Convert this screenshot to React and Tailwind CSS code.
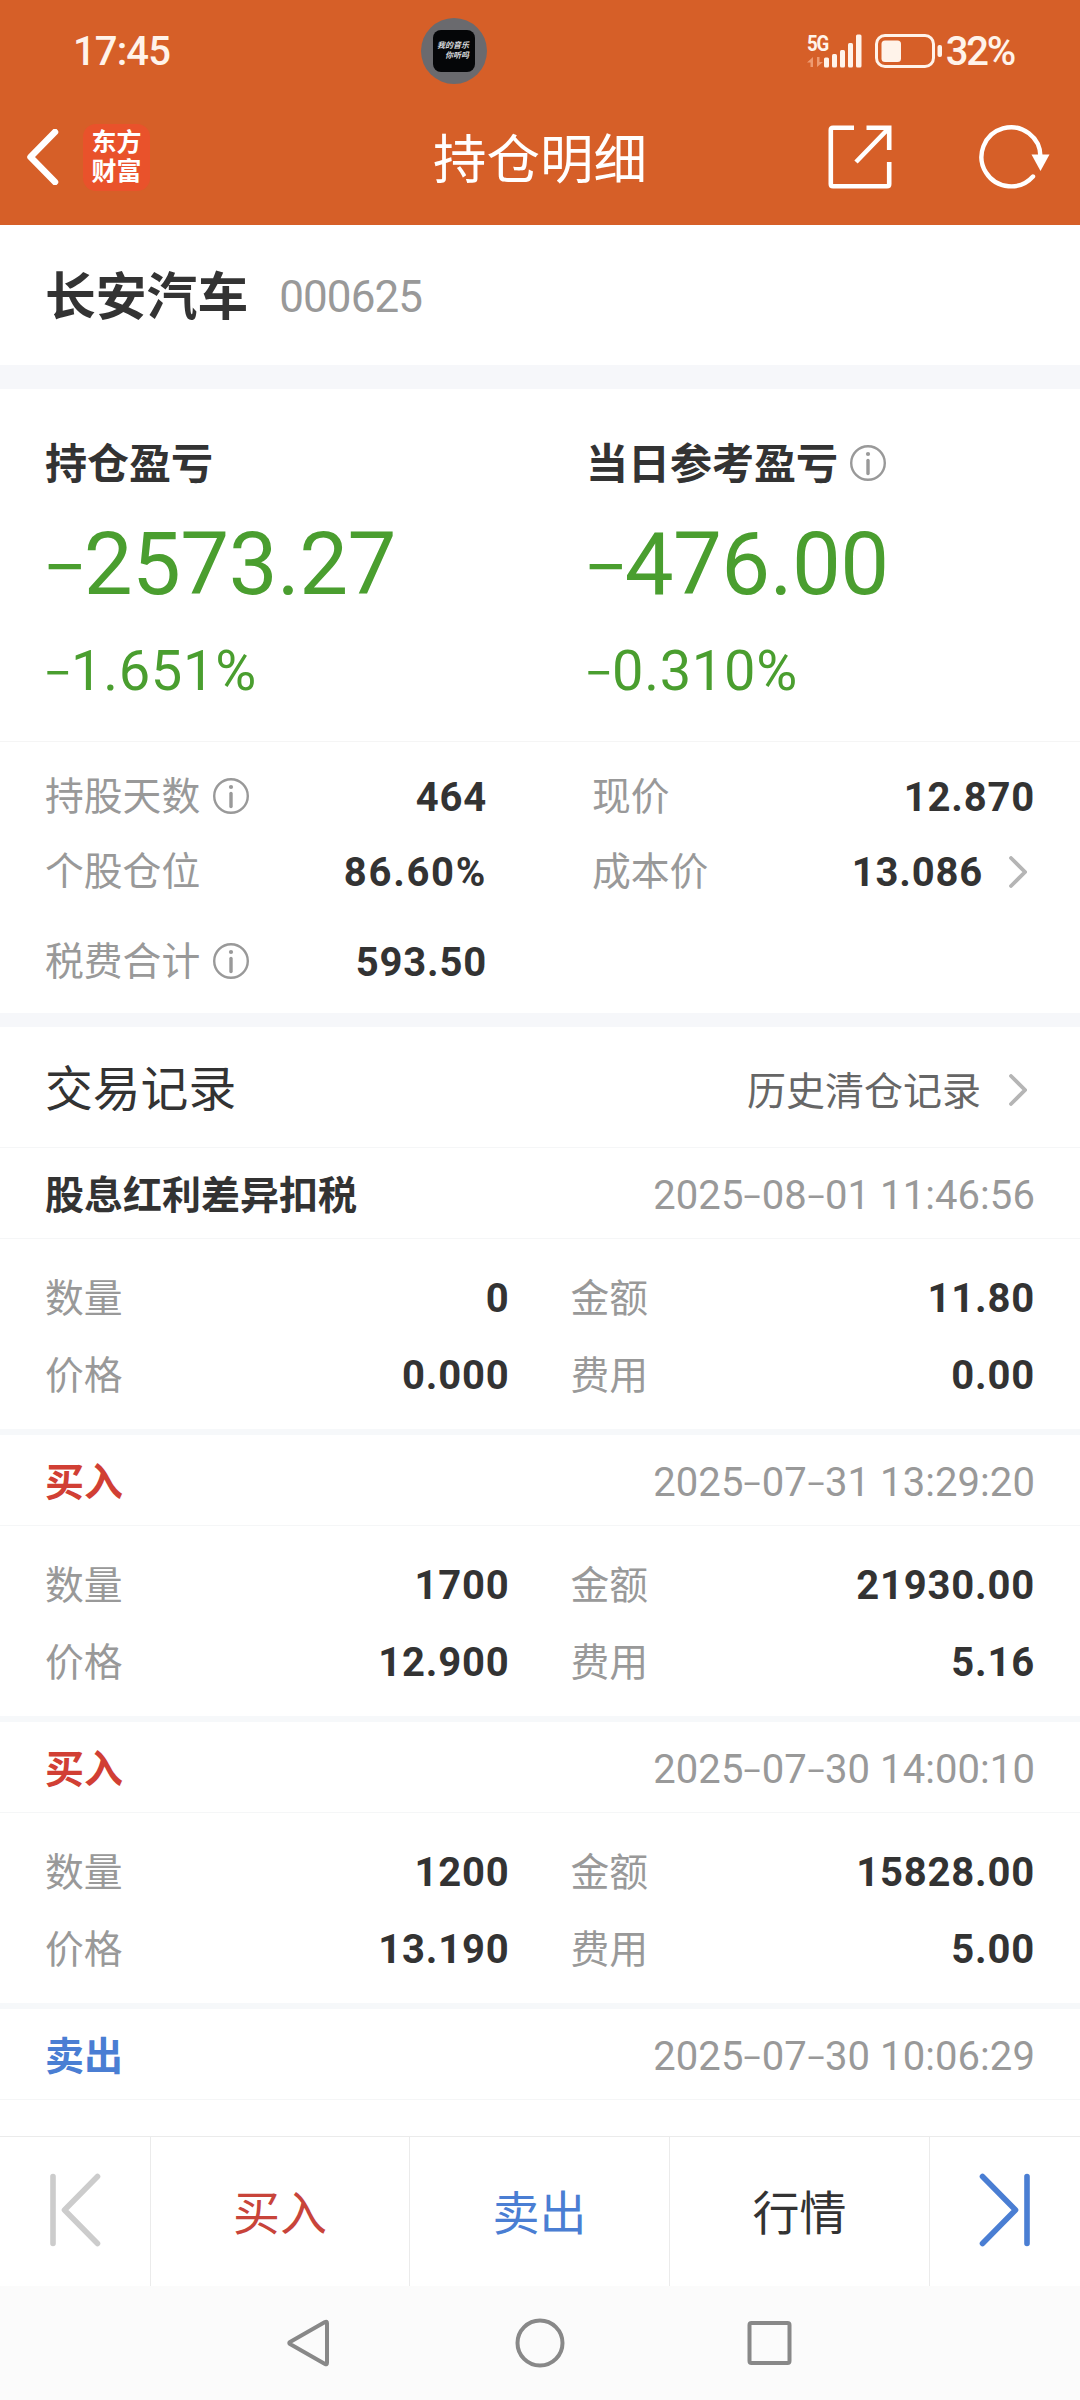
import React from "react";

const records = [
  {
    type: "股息红利差异扣税",
    color: "text-[#333333]",
    time: "2025-08-01 11:46:56",
    quantity: "0",
    amount: "11.80",
    price: "0.000",
    fee: "0.00",
  },
  {
    type: "买入",
    color: "text-[#d13f34]",
    time: "2025-07-31 13:29:20",
    quantity: "1700",
    amount: "21930.00",
    price: "12.900",
    fee: "5.16",
  },
  {
    type: "买入",
    color: "text-[#d13f34]",
    time: "2025-07-30 14:00:10",
    quantity: "1200",
    amount: "15828.00",
    price: "13.190",
    fee: "5.00",
  },
  {
    type: "卖出",
    color: "text-[#4a7ed3]",
    time: "2025-07-30 10:06:29",
  },
];

// Roboto's hyphen is too short for figures, so the dash uses a stretched Inter
const Figures = ({ children, className }) => (
  <span className={`whitespace-pre ${className}`}>
    {children.split(/(-)/).map((part, i) =>
      part === "-" ? (
        <span
          key={i}
          className="inline-block leading-none scale-x-[1.22] font-['Inter',sans-serif] font-light"
        >
          -
        </span>
      ) : (
        part
      ),
    )}
  </span>
);

const InfoIcon = ({ className }) => (
  <svg
    viewBox="0 0 36 36"
    className={`w-9 h-9 shrink-0 ${className}`}
    fill="none"
    stroke="#999999"
  >
    <circle cx="18" cy="18" r="16.8" strokeWidth="2.4" />
    <path d="M18 15.5v13" strokeWidth="3.4" strokeLinecap="round" />
    <circle cx="18" cy="9" r="2.1" fill="#999999" stroke="none" />
  </svg>
);

const ChevronRight = () => (
  <svg
    viewBox="0 0 18 32"
    className="w-[18px] h-8 shrink-0"
    fill="none"
    stroke="#b5b5b5"
    strokeWidth="3.8"
    strokeLinecap="round"
  >
    <path d="M2 2l14 14L2 30" />
  </svg>
);

const StatusBar = () => (
  <div className="h-[101px] flex items-center pl-[73px] pr-[66px] text-[#fff3ea]">
    <span className="text-[40px] font-medium leading-none tracking-[-0.900px] w-[348px] pt-0.5">
      17:45
    </span>
    <div className="w-[66px] h-[66px] rounded-full bg-[#6a6a6e] flex items-center justify-center">
      <div className="w-[42px] h-[42px] rounded-lg bg-[#050608] text-[#d8dadd] flex flex-col items-end justify-center pr-[6px] text-[8px] leading-[10px] font-bold italic">
        <span>我的音乐</span>
        <span>你听吗</span>
      </div>
    </div>
    <div className="ml-auto flex items-center">
      <div className="w-[55px] h-[34px] flex">
        <div className="w-[17px] flex flex-col">
          <span className="text-[22px] font-bold leading-[19px] h-[22px] tracking-[-1.500px] origin-left scale-x-[0.85]">
            5G
          </span>
          <svg viewBox="0 0 17 12" className="w-[17px] h-3" fill="#ee9a70">
            <path d="M0 6.500L6 1v10H3.500V6.500zM16 6L10 11V1h2.500V6z" />
          </svg>
        </div>
        <svg
          viewBox="0 0 38 34"
          className="w-[38px] h-[34px]"
          fill="currentColor"
        >
          <rect x="0" y="23.500" width="5" height="10" rx="1.500" />
          <rect x="8" y="20" width="5" height="13.500" rx="1.500" />
          <rect x="16" y="16" width="5" height="17.500" rx="1.500" />
          <rect x="24" y="9" width="5" height="24.500" rx="1.500" />
          <rect x="32" y="0.500" width="5.500" height="33" rx="1.500" />
        </svg>
      </div>
      <svg
        viewBox="0 0 68 34"
        className="w-[68px] h-[34px] ml-[13px]"
        fill="currentColor"
      >
        <rect
          x="1.500"
          y="1.500"
          width="57"
          height="31"
          rx="8.500"
          fill="none"
          stroke="currentColor"
          strokeWidth="3"
        />
        <rect x="6.500" y="6.500" width="19.500" height="21.500" rx="3.500" />
        <rect x="62.500" y="11" width="4.500" height="12" rx="2" />
      </svg>
      <span className="text-[40px] font-medium leading-none tracking-[-2.200px] ml-[3px] pt-0.5">
        32%
      </span>
    </div>
  </div>
);

const TitleBar = () => (
  <div className="h-[112px] grid grid-cols-[1fr_auto_1fr] items-center text-white">
    <div className="flex items-center pl-[26px]">
      <svg
        viewBox="0 0 34 56"
        className="w-[34px] h-14"
        fill="none"
        stroke="currentColor"
        strokeWidth="6.500"
        strokeLinecap="round"
        strokeLinejoin="round"
      >
        <path d="M29 3L4.500 28L29 53" />
      </svg>
      <div className="ml-[23px] w-[67px] h-[67px] rounded-[13px] bg-[#e9522b] flex flex-col items-center justify-center text-[25px] leading-[29px] font-bold">
        <span>东方</span>
        <span>财富</span>
      </div>
    </div>
    <h1 className="text-[53.500px] leading-none pt-[7px]">持仓明细</h1>
    <div className="flex items-center justify-end pr-[29px]">
      <svg
        viewBox="0 0 64 64"
        className="w-16 h-16"
        fill="none"
        stroke="currentColor"
        strokeWidth="4.600"
      >
        <path d="M26 2.800H5Q2.800 2.800 2.800 5V59Q2.800 61.200 5 61.200H59Q61.200 61.200 61.200 59V37" />
        <path d="M38.500 2.800H61.200V25M60 4L28 37" />
      </svg>
      <svg
        viewBox="0 0 72 64"
        className="w-[72px] h-16 ml-[87px]"
        fill="none"
        stroke="currentColor"
        strokeWidth="4.400"
        strokeLinecap="round"
      >
        <path d="M61.500 32A29.500 29.500 0 1 0 54 51.500" />
        <path d="M52.500 29.500h18L61.500 46z" fill="currentColor" stroke="none" />
      </svg>
    </div>
  </div>
);

const ProfitBlock = ({ title, value, percent, info }) => (
  <div className="text-[#4a9e2f]">
    <div className="h-[60px] flex items-center text-[#333333]">
      <span className="text-[42px] font-bold leading-none pt-[3px]">
        {title}
      </span>
      {info && <InfoIcon className="ml-3" />}
    </div>
    <Figures className="block text-[87px] leading-[88px] mt-[26px] tracking-[-0.600px]">
      {value}
    </Figures>
    <Figures className="block text-[56px] leading-[64px] mt-[31px] tracking-[0.700px]">
      {percent}
    </Figures>
  </div>
);

const StatRow = ({ label, value, info, arrow, tracking }) => (
  <div className="h-[75px] flex items-center justify-between">
    <span className="flex items-center text-[38.800px] leading-none text-[#999999]">
      <span className="pt-[2px]">{label}</span>
      {info && <InfoIcon className="ml-[13px]" />}
    </span>
    <span
      className={`flex items-center text-[40px] leading-none font-bold text-[#333333] ${tracking || "tracking-[0.800px]"}`}
    >
      <span className="pt-[2px]">{value}</span>
      {arrow && (
        <span className="ml-[26px] mr-[8px] flex">
          <ChevronRight />
        </span>
      )}
    </span>
  </div>
);

const Field = ({ label, value }) => (
  <div className="h-[77px] flex items-center justify-between">
    <span className="text-[38.800px] leading-none pt-px text-[#999999]">
      {label}
    </span>
    <span className="text-[40px] leading-none font-bold tracking-[0.800px] text-[#333333]">
      {value}
    </span>
  </div>
);

const RecordCard = ({ record }) => (
  <div>
    <div className="h-[91px] border-b border-[#f5f6f7] px-[45px] pt-[4px] flex items-center justify-between">
      <span
        className={`text-[39px] leading-none font-bold pt-[2px] ${record.color}`}
      >
        {record.type}
      </span>
      <Figures className="text-[40px] leading-none tracking-[0.080px] text-[#999999]">
        {record.time}
      </Figures>
    </div>
    {record.quantity && (
      <div className="h-[196px] border-b-[6px] border-[#f6f8fa] pt-[21px] px-[45px] grid grid-cols-2 gap-x-[61px] content-start">
        <Field label="数量" value={record.quantity} />
        <Field label="金额" value={record.amount} />
        <Field label="价格" value={record.price} />
        <Field label="费用" value={record.fee} />
      </div>
    )}
  </div>
);

const BottomBar = () => (
  <div className="h-[150px] shrink-0 border-t border-[#ebebeb] bg-white grid grid-cols-[151px_259px_260px_260px_150px] text-[47px] leading-none">
    <div className="border-r border-[#ebebeb] flex items-center justify-center pb-[3px]">
      <svg
        viewBox="0 0 52 74"
        className="w-[52px] h-[74px]"
        fill="none"
        stroke="#cccccc"
        strokeWidth="5.600"
        strokeLinecap="round"
        strokeLinejoin="round"
      >
        <path d="M4 3.500v67M48.500 3.500L15.500 37L48.500 70.500" />
      </svg>
    </div>
    <div className="border-r border-[#ebebeb] flex items-center justify-center pt-[3px] text-[#c8443a]">
      买入
    </div>
    <div className="border-r border-[#ebebeb] flex items-center justify-center pt-[3px] text-[#4a7ed3]">
      卖出
    </div>
    <div className="border-r border-[#ebebeb] flex items-center justify-center pt-[3px] text-[#333333]">
      行情
    </div>
    <div className="flex items-center justify-center pb-[3px]">
      <svg
        viewBox="0 0 52 74"
        className="w-[52px] h-[74px]"
        fill="none"
        stroke="#4a7ed3"
        strokeWidth="5.600"
        strokeLinecap="round"
        strokeLinejoin="round"
      >
        <path d="M48 3.500v67M3.500 3.500L36.500 37L3.500 70.500" />
      </svg>
    </div>
  </div>
);

const SystemNav = () => (
  <div className="h-[114px] shrink-0 bg-[#fbfbfb] flex items-center justify-center gap-[181px]">
    <svg
      viewBox="0 0 50 50"
      className="w-[50px] h-[50px]"
      fill="none"
      stroke="#888888"
      strokeWidth="4"
      strokeLinejoin="round"
    >
      <path d="M43 5.200Q43 3 41 4L6 24Q4.500 25 6 26L41 46Q43 47 43 44.800z" />
    </svg>
    <svg
      viewBox="0 0 50 50"
      className="w-[50px] h-[50px]"
      fill="none"
      stroke="#888888"
      strokeWidth="4"
    >
      <circle cx="25" cy="25" r="22.500" />
    </svg>
    <svg
      viewBox="0 0 50 50"
      className="w-[50px] h-[50px]"
      fill="none"
      stroke="#888888"
      strokeWidth="4"
    >
      <rect x="3.500" y="5" width="40" height="40" rx="2" />
    </svg>
  </div>
);

export default function App() {
  return (
    <div className="w-[1080px] h-[2400px] overflow-hidden flex flex-col bg-white font-['Roboto','Noto_Sans_CJK_SC',sans-serif]">
      <header className="h-[225px] shrink-0 bg-[#d65f28]">
        <StatusBar />
        <TitleBar />
      </header>

      <main className="flex-1 min-h-0 overflow-hidden">
        {/* Stock name */}
        <section className="h-[140px] px-[45px] pt-[3px] flex items-center">
          <span className="text-[50.800px] leading-none font-bold pt-[3px] text-[#333333]">
            长安汽车
          </span>
          <span className="ml-[31px] text-[44px] leading-none tracking-[-0.900px] text-[#999999]">
            000625
          </span>
        </section>
        <div className="h-6 bg-[#f6f7fa]" />

        {/* Profit and loss */}
        <section className="h-[353px] pt-[44px] pl-[45px] grid grid-cols-[541px_1fr] content-start border-b border-[#f5f5f5]">
          <ProfitBlock title="持仓盈亏" value="-2573.27" percent="-1.651%" />
          <ProfitBlock
            title="当日参考盈亏"
            value="-476.00"
            percent="-0.310%"
            info
          />
        </section>

        {/* Position details */}
        <section className="h-[271px] pt-[17px] px-[45px] flex justify-between">
          <div className="w-[442px]">
            <StatRow label="持股天数" value="464" info />
            <StatRow
              label="个股仓位"
              value="86.60%"
              tracking="tracking-[1.700px]"
            />
            <div className="mt-[15px]">
              <StatRow label="税费合计" value="593.50" info />
            </div>
          </div>
          <div className="w-[443px]">
            <StatRow label="现价" value="12.870" />
            <StatRow label="成本价" value="13.086" arrow />
          </div>
        </section>
        <div className="h-[14px] bg-[#f6f7fa]" />

        {/* Trade records */}
        <section>
          <div className="h-[121px] border-b border-[#f5f6f7] px-[45px] flex items-center justify-between">
            <h2 className="text-[47.800px] leading-none pt-[7px] text-[#333333]">
              交易记录
            </h2>
            <div className="flex items-center pt-[5px] pr-[8px]">
              <span className="text-[39px] leading-none pt-[6px] text-[#666666] mr-[28px]">
                历史清仓记录
              </span>
              <ChevronRight />
            </div>
          </div>
          {records.map((record) => (
            <RecordCard key={record.time} record={record} />
          ))}
        </section>
      </main>

      <BottomBar />
      <SystemNav />
    </div>
  );
}
